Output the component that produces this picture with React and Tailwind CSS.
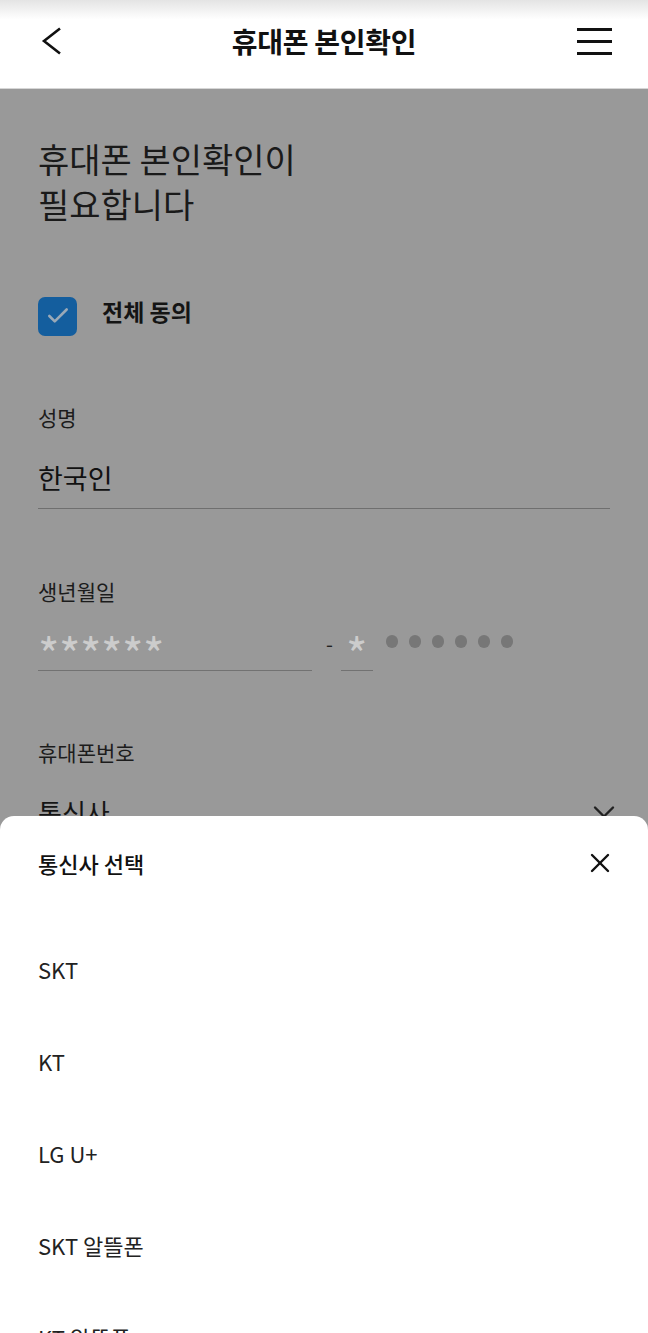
import { ChevronDown, X, Check } from 'lucide-react';

const carriers = ['SKT', 'KT', 'LG U+', 'SKT 알뜰폰', 'KT 알뜰폰'];

export default function App() {
  return (
    <div
      className="relative h-[1333px] w-full overflow-hidden bg-[#999999] text-[#151515]"
      style={{ fontFamily: '"Noto Sans CJK KR", "Noto Sans", sans-serif' }}
    >
      {/* Header */}
      <header className="relative flex h-[89px] items-center justify-between border-b border-[#d6d6d6] bg-gradient-to-b from-[#e4e4e4] via-white via-[22%] to-white px-[36px]">
        <svg width="22" height="30" viewBox="0 0 22 30" className="ml-[5px] -mt-[6px]" fill="none">
          <polyline points="19,2.5 3,15 19,27.5" stroke="#111" strokeWidth="2.6" strokeLinejoin="miter" />
        </svg>
        <h1 className="absolute left-1/2 top-[41px] -translate-x-1/2 -translate-y-1/2 text-[28px] font-bold tracking-[-0.3px] text-[#111]">
          휴대폰 본인확인
        </h1>
        <div className="-mt-[6px] flex w-[35px] flex-col gap-[9px]">
          <span className="block h-[3px] w-full bg-[#111]" />
          <span className="block h-[3px] w-full bg-[#111]" />
          <span className="block h-[3px] w-full bg-[#111]" />
        </div>
      </header>

      {/* Page behind the dimmed overlay */}
      <main className="flex flex-col px-[38px] pt-[47px]">
        <h2 className="text-[34px] leading-[45px] text-[#1a1a1a]">
          휴대폰 본인확인이
          <br />
          필요합니다
        </h2>

        <div className="mt-[70px] flex items-center gap-[25px]">
          <div className="flex h-[39px] w-[39px] items-center justify-center rounded-[7px] bg-[#145e9e]">
            <Check className="h-[26px] w-[26px] text-[#9aa9b7]" strokeWidth={2.4} />
          </div>
          <span className="mb-[10px] text-[23px] font-bold leading-[30px] text-[#141414]">전체 동의</span>
        </div>

        <label className="mt-[66px] text-[21px] leading-[30px] text-[#1c1c1c]">성명</label>
        <div className="mt-[28px] border-b border-[#6f6f6f] pb-[12px]">
          <span className="block text-[27px] leading-[36px] text-[#111]">한국인</span>
        </div>

        <label className="mt-[67px] text-[21px] leading-[30px] text-[#1c1c1c]">생년월일</label>
        <div className="mt-[21px] flex items-start">
          <div className="w-[274px] border-b border-[#727272] pb-[2px] pt-[11px]">
            <span className="block text-[46px] leading-[30px] tracking-[-0.5px] text-[#cccccc]">******</span>
          </div>
          <span className="ml-[14px] mt-[2px] text-[20px] leading-[30px] text-[#222]">-</span>
          <div className="ml-[8px] w-[32px] border-b border-[#727272] pb-[2px] pt-[11px]">
            <span className="block pl-[5px] text-[46px] leading-[30px] text-[#cccccc]">*</span>
          </div>
          <div className="ml-[13px] mt-[8px] flex gap-[11px]">
            {[0, 1, 2, 3, 4, 5].map((i) => (
              <span key={i} className="block h-[13px] w-[12px] rounded-full bg-[#777777]" />
            ))}
          </div>
        </div>

        <label className="mt-[66px] text-[21px] leading-[30px] text-[#1c1c1c]">휴대폰번호</label>
        <div className="mt-[27px] flex items-center justify-between">
          <span className="text-[26px] leading-[36px] text-[#151515]">통신사</span>
          <ChevronDown className="mr-[-12px] h-[36px] w-[36px] text-[#222]" strokeWidth={1.6} />
        </div>
      </main>

      {/* Bottom sheet */}
      <section className="absolute inset-x-0 top-[816px] bottom-0 rounded-t-[14px] bg-white px-[38px] pt-[31px]">
        <div className="flex items-center justify-between">
          <h3 className="text-[22px] font-medium leading-[30px] text-[#111]">통신사 선택</h3>
          <X className="-mr-[6px] h-[32px] w-[32px] text-[#111]" strokeWidth={1.8} />
        </div>
        <ul className="mt-[44px] flex flex-col">
          {carriers.map((c) => (
            <li key={c} className="flex h-[92px] items-center text-[22px] leading-[30px] text-[#222]">
              {c}
            </li>
          ))}
        </ul>
      </section>
    </div>
  );
}
